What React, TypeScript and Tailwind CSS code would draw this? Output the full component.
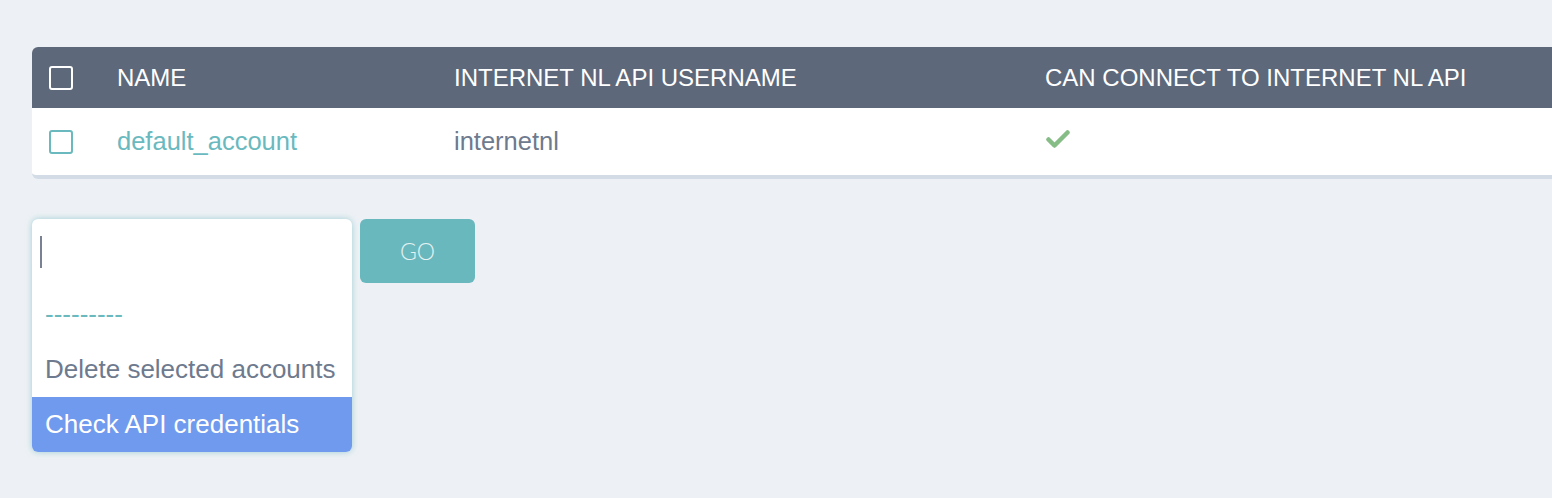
const font = "font-['Liberation_Sans','Helvetica_Neue',Arial,sans-serif]";

function Box({ className }: { className: string }) {
  return <div className={`w-6 h-6 rounded-[3px] border-2 ${className}`} />;
}

function Tick() {
  return (
    <svg width="24" height="19" viewBox="0 0 24 19" className="text-[#86bc86]">
      <polyline points="2.5,9.5 8.5,15.5 21.5,2.5" fill="none" stroke="currentColor" strokeWidth="4.5" strokeLinecap="round" strokeLinejoin="round" />
    </svg>
  );
}

export default function App() {
  return (
    <div className={`min-h-[498px] w-[1552px] overflow-hidden bg-[#edf1f5] pt-[47px] pl-8 ${font}`}>
      {/* Accounts table */}
      <div className="w-[1540px] rounded-md bg-white border-b-4 border-[#d3dce6] overflow-hidden">
        <div className="grid grid-cols-[85px_337px_591px_1fr] items-center h-[61px] bg-[#5d687b] text-white text-[24px]">
          <div className="pl-[17px]">
            <Box className="border-white" />
          </div>
          <div>NAME</div>
          <div>INTERNET NL API USERNAME</div>
          <div>CAN CONNECT TO INTERNET NL API</div>
        </div>
        <div className="grid grid-cols-[85px_337px_591px_1fr] items-center h-[67px] text-[25.5px]">
          <div className="pl-[17px]">
            <Box className="border-[#6ab9be]" />
          </div>
          <div className="text-[#6ab9be]">default_account</div>
          <div className="text-[#6e7a8e]">internetnl</div>
          <div className="pl-[1px] pb-[5px]">
            <Tick />
          </div>
        </div>
      </div>

      {/* Bulk actions */}
      <div className="flex items-start gap-2 mt-10">
        <div className="w-80 rounded-md bg-white overflow-hidden shadow-[0_0_6px_rgba(106,185,190,0.6)] text-[26px]">
          <div className="h-[68px] pl-2 pt-[17px]">
            <div className="w-[2px] h-8 bg-[#7a8192]" />
          </div>
          <div className="h-[55px] flex items-center px-[13px] text-[#6ab9be]">---------</div>
          <div className="h-[55px] flex items-center px-[13px] text-[#6e7a8e]">Delete selected accounts</div>
          <div className="h-[55px] flex items-center px-[13px] bg-[#6f9aee] text-white">Check API credentials</div>
        </div>
        <button className="w-[115px] h-16 rounded-md bg-[#69b8be] text-[#e4f2f3] text-[23px] font-light font-['Lato',sans-serif]">
          GO
        </button>
      </div>
    </div>
  );
}
